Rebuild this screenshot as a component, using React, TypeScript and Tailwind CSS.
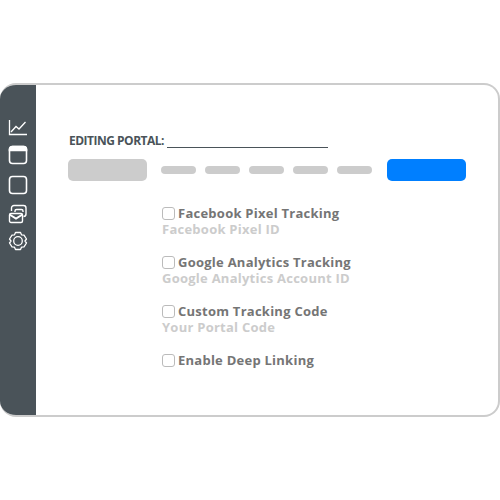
const fields = [
  { label: 'Facebook Pixel Tracking', hint: 'Facebook Pixel ID' },
  { label: 'Google Analytics Tracking', hint: 'Google Analytics Account ID' },
  { label: 'Custom Tracking Code', hint: 'Your Portal Code' },
  { label: 'Enable Deep Linking' },
];

function SideIcons() {
  return (
    <div className="flex flex-col items-center pt-[35px]">
      <svg width="20" height="18" viewBox="0 0 20 18" fill="none" stroke="white" strokeWidth="1.3">
        <path d="M1.500 2v14.500H19" />
        <path d="M3 14l5-5.500 3 2.500 6.500-7" />
      </svg>
      <svg width="20" height="20" viewBox="0 0 20 20" fill="none" stroke="white" strokeWidth="1.6" className="mt-[9px]">
        <rect x="1.500" y="1.500" width="17" height="17" rx="3" />
        <path d="M1.500 5.500h17v-1a3 3 0 0 0-3-3h-11a3 3 0 0 0-3 3z" fill="white" />
      </svg>
      <svg width="20" height="20" viewBox="0 0 20 20" fill="none" stroke="white" strokeWidth="1.6" className="mt-[10px]">
        <rect x="1.500" y="1.500" width="17" height="17" rx="3" />
      </svg>
      <svg width="20" height="20" viewBox="0 0 20 20" fill="none" stroke="white" strokeWidth="1.400" className="mt-[9px]">
        <path d="M3.500 7V4a2.500 2.500 0 0 1 2.500-2.500h9.500A2.500 2.500 0 0 1 18 4v6a2.500 2.500 0 0 1-2.500 2.500" />
        <path d="M7 8V7a1.500 1.500 0 0 1 1.500-1.500h5A1.500 1.500 0 0 1 15 7v1" />
        <rect x="1.500" y="9.500" width="13" height="9" rx="1.500" />
        <path d="M1.500 10.500L8 14.500l6.500-4" strokeWidth="2" />
      </svg>
      <svg width="20" height="20" viewBox="0 0 20 20" fill="none" stroke="white" strokeWidth="1.300" className="mt-[7px]">
        <path d="M7.500 1.500h5l1 2.300 2.500.3 2.500 3.900-1.500 2 1.500 2-2.500 3.900-2.500.3-1 2.300h-5l-1-2.300-2.500-.3-2.500-3.900 1.500-2-1.500-2 2.500-3.900 2.500-.3z" strokeLinejoin="round" />
        <circle cx="10" cy="10" r="4.300" />
      </svg>
    </div>
  );
}

export default function App() {
  return (
    <div className="w-[500px] h-[500px] bg-white pt-[83px] font-['Open_Sans',sans-serif]">
      <div className="flex h-[334px] rounded-[16px] border-2 border-l-0 border-[#cccccc] overflow-hidden">
        <div className="w-[36px] -my-[2px] bg-[#4a5359] shrink-0">
          <SideIcons />
        </div>
        <div className="flex-1 pl-[33px] pt-[47px]">
          <div className="flex items-end h-[18px] text-[12px] font-bold leading-[18px] tracking-[-0.5px] text-[#4a5359]">
            <span>EDITING PORTAL:</span>
            <span className="ml-[3px] mb-[2px] w-[161px] h-[1px] bg-[#4a5359]" />
          </div>
          <div className="flex items-center mt-[9px] -ml-[1px]">
            <div className="w-[79px] h-[22px] rounded-[5px] bg-[#cccccc]" />
            <div className="flex gap-[9px] ml-[14px]">
              <div className="w-[35px] h-[8px] rounded-full bg-[#cccccc]" />
              <div className="w-[35px] h-[8px] rounded-full bg-[#cccccc]" />
              <div className="w-[35px] h-[8px] rounded-full bg-[#cccccc]" />
              <div className="w-[35px] h-[8px] rounded-full bg-[#cccccc]" />
              <div className="w-[35px] h-[8px] rounded-full bg-[#cccccc]" />
            </div>
            <div className="w-[79px] h-[22px] rounded-[5px] bg-[#007fff] ml-[15px]" />
          </div>
          <div className="flex flex-col gap-[16px] ml-[93px] mt-[23px]">
            {fields.map((f) => (
              <div key={f.label}>
                <label className="flex items-center gap-[3px] h-[18px]">
                  <span className="w-[13px] h-[13px] rounded-[3px] border-[1.5px] border-[#bbbbbb]" />
                  <span className="text-[13px] font-bold tracking-[0.25px] leading-[18px] text-[#757575]">{f.label}</span>
                </label>
                {f.hint && (
                  <div className="text-[13px] font-bold tracking-[0.25px] leading-[15px] text-[#cccccc]">{f.hint}</div>
                )}
              </div>
            ))}
          </div>
        </div>
      </div>
    </div>
  );
}
